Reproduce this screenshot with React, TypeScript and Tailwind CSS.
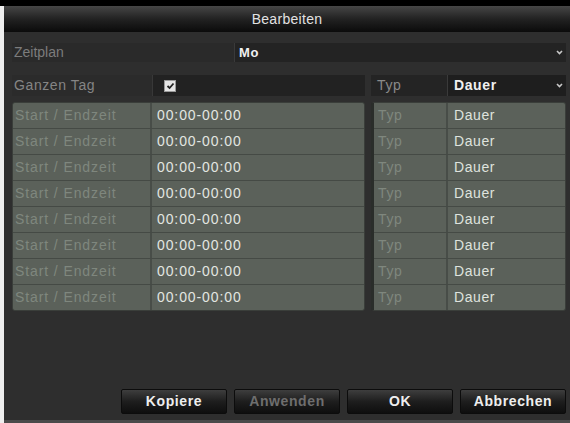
const slots = Array.from({ length: 8 }, (_, i) => i);

function Chevron() {
  return (
    <svg width="7" height="5" viewBox="0 0 7 5" className="shrink-0">
      <path d="M1 1 L3.5 3.5 L6 1" stroke="#c8c8c8" strokeWidth="1.6" fill="none" />
    </svg>
  );
}

function Checkbox() {
  return (
    <div className="w-[12px] h-[12px] bg-[#e6e6e6] border border-[#9a9a9a] flex items-center justify-center">
      <svg width="9" height="8" viewBox="0 0 9 8">
        <path d="M1.5 4 L3.6 6 L7.5 1.5" stroke="#222" strokeWidth="1.8" fill="none" />
      </svg>
    </div>
  );
}

function ActionButton({ label, disabled }: { label: string; disabled?: boolean }) {
  return (
    <button
      className={`w-[106px] h-[25px] rounded-[2px] border border-[#0c0c0c] bg-gradient-to-b from-[#3e3e3e] via-[#1e1e1e] to-[#0e0e0e] text-[14px] tracking-[0.6px] font-bold ${
        disabled ? "text-[#6e6e6e]" : "text-[#eeeeee]"
      }`}
    >
      {label}
    </button>
  );
}

export default function App() {
  return (
    <div className="w-[570px] h-[423px] bg-black flex flex-col font-['Liberation_Sans',Arial,sans-serif] text-[14px] tracking-[0.6px] overflow-hidden">
      <div className="h-[6px] shrink-0" />
      <div className="flex flex-1 min-h-0">
        <div className="w-[4px] bg-[#eeeeee] shrink-0" />
        <div className="flex-1 flex flex-col bg-[#2e2e2e] border-b-[3px] border-[#4a4a4a]">
          {/* title bar */}
          <div className="h-[26px] shrink-0 bg-gradient-to-b from-[#474747] via-[#222] to-[#0b0b0b] flex items-center justify-center text-[#e2e2e2] tracking-[0.3px]">
            Bearbeiten
          </div>

          <div className="flex flex-col pl-[8px] pr-[4px] pt-[11px] flex-1">
            {/* schedule selector */}
            <div className="h-[19px] flex">
              <div className="w-[222px] bg-[#2a2a2a] text-[#7c7c7c] pl-[2px] flex items-center tracking-normal">Zeitplan</div>
              <div className="flex-1 bg-[#232323] border-l border-[#3a3a3a] flex items-center justify-between pl-[4px] pr-[3px]">
                <span className="font-bold text-[#f0f0f0] text-[13px]">Mo</span>
                <Chevron />
              </div>
            </div>

            {/* whole day + type */}
            <div className="h-[21px] mt-[13px] flex">
              <div className="w-[140px] bg-[#2b2b2b] text-[#858585] pl-[2px] flex items-center">Ganzen Tag</div>
              <div className="w-[213px] bg-[#222] border-l border-[#383838] pl-[11px] flex items-center">
                <Checkbox />
              </div>
              <div className="w-[76px] ml-[6px] bg-[#242424] text-[#8a8a8a] pl-[6px] flex items-center">Typ</div>
              <div className="flex-1 bg-[#1e1e1e] border-l border-[#3a3a3a] flex items-center justify-between pl-[6px] pr-[3px]">
                <span className="font-bold text-[#f0f0f0]">Dauer</span>
                <Chevron />
              </div>
            </div>

            {/* time slots */}
            <div className="mt-[6px] flex gap-[6px]">
              <div className="w-[353px] flex flex-col rounded-[3px] overflow-hidden border border-[#3a3e3a] bg-[#454a45]">
                {slots.map((i) => (
                  <div key={i} className={`h-[25px] flex bg-[#5b615a] ${i > 0 ? "mt-[1px]" : ""}`}>
                    <div className="w-[139px] pl-[2px] flex items-center text-[#7f877e] border-r-2 border-[#484d48] tracking-[0.9px]">
                      Start / Endzeit
                    </div>
                    <div className="flex-1 pl-[5px] flex items-center text-[#e2e6e1] tracking-[0.9px]">00:00-00:00</div>
                  </div>
                ))}
              </div>
              <div className="flex-1 flex flex-col rounded-[3px] overflow-hidden border border-[#3a3e3a] bg-[#454a45] border-l-[3px] border-l-[#2a2d2a]">
                {slots.map((i) => (
                  <div key={i} className={`h-[25px] flex bg-[#5b615a] ${i > 0 ? "mt-[1px]" : ""}`}>
                    <div className="w-[74px] pl-[4px] flex items-center text-[#7f877e] border-r-2 border-[#484d48]">
                      Typ
                    </div>
                    <div className="flex-1 pl-[6px] flex items-center text-[#dfe3de]">Dauer</div>
                  </div>
                ))}
              </div>
            </div>

            <div className="flex-1" />

            {/* actions */}
            <div className="flex justify-end gap-[7px] pb-[6px]">
              <ActionButton label="Kopiere" />
              <ActionButton label="Anwenden" disabled />
              <ActionButton label="OK" />
              <ActionButton label="Abbrechen" />
            </div>
          </div>
        </div>
      </div>
    </div>
  );
}
